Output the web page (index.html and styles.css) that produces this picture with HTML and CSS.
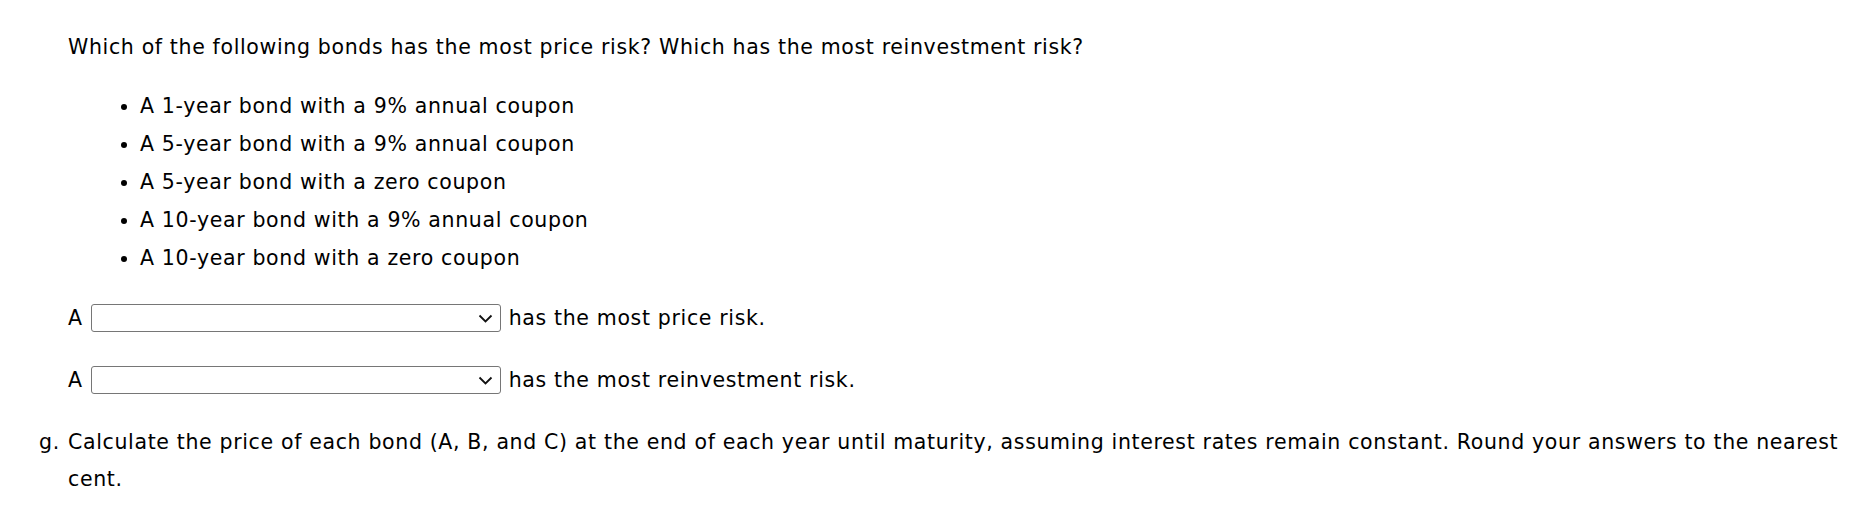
FILE: index.html
```html
<!DOCTYPE html>
<html lang="en">
<head>
<meta charset="utf-8">
<title>Bond risk question</title>
<link rel="stylesheet" href="styles.css">
</head>
<body>
<div class="page">
  <p class="question">Which of the following bonds has the most price risk? Which has the most reinvestment risk?</p>
  <ul class="bonds">
    <li>A 1-year bond with a 9% annual coupon</li>
    <li>A 5-year bond with a 9% annual coupon</li>
    <li>A 5-year bond with a zero coupon</li>
    <li>A 10-year bond with a 9% annual coupon</li>
    <li>A 10-year bond with a zero coupon</li>
  </ul>
  <div class="answer-row">
    <span>A</span>
    <span class="select"><svg class="chev" width="15" height="9" viewBox="0 0 15 9"><path d="M1.5 1.5 L7.5 7.5 L13.5 1.5" fill="none" stroke="#111" stroke-width="1.8"/></svg></span>
    <span>has the most price risk.</span>
  </div>
  <div class="answer-row second">
    <span>A</span>
    <span class="select"><svg class="chev" width="15" height="9" viewBox="0 0 15 9"><path d="M1.5 1.5 L7.5 7.5 L13.5 1.5" fill="none" stroke="#111" stroke-width="1.8"/></svg></span>
    <span>has the most reinvestment risk.</span>
  </div>
  <div class="part">
    <span class="label">g.</span>
    <p class="part-text">Calculate the price of each bond (A, B, and C) at the end of each year until maturity, assuming interest rates remain constant. Round your answers to the nearest cent.</p>
  </div>
</div>
</body>
</html>
```

FILE: styles.css
```css
html, body {
  margin: 0;
  padding: 0;
  background: #fff;
}
body {
  font-family: "DejaVu Sans", Verdana, sans-serif;
  font-size: 20.5px;
  letter-spacing: 0.65px;
  color: #000;
}
.page {
  padding: 29px 16px 0 68px;
}
.question {
  margin: 0;
  line-height: 37px;
}
.bonds {
  margin: 21px 0 0 0;
  padding-left: 72px;
  line-height: 38px;
}
.answer-row {
  display: flex;
  align-items: center;
  gap: 8px;
  height: 38px;
  margin-top: 22px;
}
.answer-row.second {
  margin-top: 24px;
}
.select {
  box-sizing: border-box;
  width: 410px;
  height: 28px;
  border: 1px solid #767676;
  border-radius: 3px;
  display: flex;
  align-items: center;
  justify-content: flex-end;
  padding-right: 7px;
  background: #fff;
}
.chev {
  display: block;
}
.part {
  display: flex;
  margin: 25px 0 0 -29px;
}
.label {
  width: 29px;
  flex: none;
  line-height: 37px;
}
.part-text {
  margin: 0;
  line-height: 37px;
}
```
